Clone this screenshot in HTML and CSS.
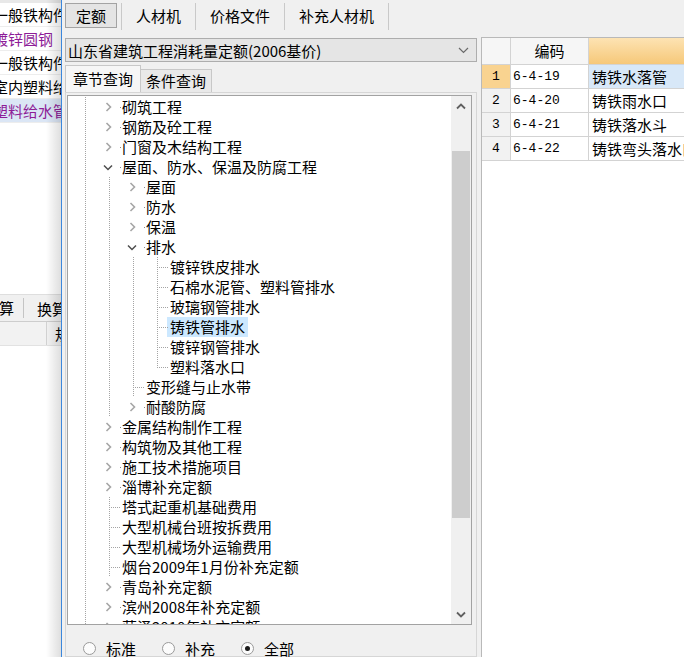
FILE: index.html
```html
<!DOCTYPE html>
<html lang="zh-CN">
<head>
<meta charset="utf-8">
<title>定额</title>
<link rel="stylesheet" href="styles.css">
</head>
<body>
<div class="screen">
  <aside class="left">
    <div class="lgrid">
      <div class="lrow">一般铁构件</div>
      <div class="lrow purple">镀锌圆钢</div>
      <div class="lrow">一般铁构件</div>
      <div class="lrow">室内塑料给水管</div>
      <div class="lrow purple sel">塑料给水管</div>
    </div>
    <div class="lhead"><span class="lh1">计算</span><span class="lh2">换算</span></div>
    <div class="lsub"><span class="ls1"></span><span class="ls2">规格</span></div>
    <div class="lshade"></div>
  </aside>

  <main class="win">
    <nav class="tabs">
      <span class="tab on">定额</span>
      <span class="tab">人材机</span>
      <span class="tab">价格文件</span>
      <span class="tab last">补充人材机</span>
    </nav>

    <div class="body">
      <section class="query">
        <div class="combo">
          <span>山东省建筑工程消耗量定额(2006基价)</span>
          <svg class="cv" width="11" height="7" viewBox="0 0 11 7"><polyline points="1,1 5.5,5.5 10,1" fill="none" stroke="#6a6a6a" stroke-width="1.2"/></svg>
        </div>
        <div class="subtabs">
          <span class="st on">章节查询</span>
          <span class="st">条件查询</span>
        </div>
        <div class="pane">
          <div class="treebox">
            <div class="tree">
              <div class="r"><span class="g v"></span><span class="n col"><svg width="7" height="10" viewBox="0 0 7 10"><polyline points="1.5,1 5.5,5 1.5,9"/></svg></span><span class="t">砌筑工程</span></div>
              <div class="r"><span class="g v"></span><span class="n col"><svg width="7" height="10" viewBox="0 0 7 10"><polyline points="1.5,1 5.5,5 1.5,9"/></svg></span><span class="t">钢筋及砼工程</span></div>
              <div class="r"><span class="g v"></span><span class="n col"><svg width="7" height="10" viewBox="0 0 7 10"><polyline points="1.5,1 5.5,5 1.5,9"/></svg></span><span class="t">门窗及木结构工程</span></div>
              <div class="r"><span class="g v"></span><span class="n exp"><svg width="10" height="7" viewBox="0 0 10 7"><polyline points="1,1.5 5,5.5 9,1.5"/></svg></span><span class="t">屋面、防水、保温及防腐工程</span></div>
              <div class="r"><span class="g v"></span><span class="g v"></span><span class="n col"><svg width="7" height="10" viewBox="0 0 7 10"><polyline points="1.5,1 5.5,5 1.5,9"/></svg></span><span class="t">屋面</span></div>
              <div class="r"><span class="g v"></span><span class="g v"></span><span class="n col"><svg width="7" height="10" viewBox="0 0 7 10"><polyline points="1.5,1 5.5,5 1.5,9"/></svg></span><span class="t">防水</span></div>
              <div class="r"><span class="g v"></span><span class="g v"></span><span class="n col"><svg width="7" height="10" viewBox="0 0 7 10"><polyline points="1.5,1 5.5,5 1.5,9"/></svg></span><span class="t">保温</span></div>
              <div class="r"><span class="g v"></span><span class="g v"></span><span class="n exp"><svg width="10" height="7" viewBox="0 0 10 7"><polyline points="1,1.5 5,5.5 9,1.5"/></svg></span><span class="t">排水</span></div>
              <div class="r"><span class="g v"></span><span class="g v"></span><span class="g v"></span><span class="n leaf"></span><span class="t">镀锌铁皮排水</span></div>
              <div class="r"><span class="g v"></span><span class="g v"></span><span class="g v"></span><span class="n leaf"></span><span class="t">石棉水泥管、塑料管排水</span></div>
              <div class="r"><span class="g v"></span><span class="g v"></span><span class="g v"></span><span class="n leaf"></span><span class="t">玻璃钢管排水</span></div>
              <div class="r"><span class="g v"></span><span class="g v"></span><span class="g v"></span><span class="n leaf"></span><span class="t sel">铸铁管排水</span></div>
              <div class="r"><span class="g v"></span><span class="g v"></span><span class="g v"></span><span class="n leaf"></span><span class="t">镀锌钢管排水</span></div>
              <div class="r"><span class="g v"></span><span class="g v"></span><span class="g v"></span><span class="n leaf last"></span><span class="t">塑料落水口</span></div>
              <div class="r"><span class="g v"></span><span class="g v"></span><span class="n leaf"></span><span class="t">变形缝与止水带</span></div>
              <div class="r"><span class="g v"></span><span class="g v"></span><span class="n col"><svg width="7" height="10" viewBox="0 0 7 10"><polyline points="1.5,1 5.5,5 1.5,9"/></svg></span><span class="t">耐酸防腐</span></div>
              <div class="r"><span class="g v"></span><span class="n col"><svg width="7" height="10" viewBox="0 0 7 10"><polyline points="1.5,1 5.5,5 1.5,9"/></svg></span><span class="t">金属结构制作工程</span></div>
              <div class="r"><span class="g v"></span><span class="n col"><svg width="7" height="10" viewBox="0 0 7 10"><polyline points="1.5,1 5.5,5 1.5,9"/></svg></span><span class="t">构筑物及其他工程</span></div>
              <div class="r"><span class="g v"></span><span class="n col"><svg width="7" height="10" viewBox="0 0 7 10"><polyline points="1.5,1 5.5,5 1.5,9"/></svg></span><span class="t">施工技术措施项目</span></div>
              <div class="r"><span class="g v"></span><span class="n col"><svg width="7" height="10" viewBox="0 0 7 10"><polyline points="1.5,1 5.5,5 1.5,9"/></svg></span><span class="t">淄博补充定额</span></div>
              <div class="r"><span class="g v"></span><span class="n leaf"></span><span class="t">塔式起重机基础费用</span></div>
              <div class="r"><span class="g v"></span><span class="n leaf"></span><span class="t">大型机械台班按拆费用</span></div>
              <div class="r"><span class="g v"></span><span class="n leaf"></span><span class="t">大型机械场外运输费用</span></div>
              <div class="r"><span class="g v"></span><span class="n leaf"></span><span class="t">烟台2009年1月份补充定额</span></div>
              <div class="r"><span class="g v"></span><span class="n col"><svg width="7" height="10" viewBox="0 0 7 10"><polyline points="1.5,1 5.5,5 1.5,9"/></svg></span><span class="t">青岛补充定额</span></div>
              <div class="r"><span class="g v"></span><span class="n col"><svg width="7" height="10" viewBox="0 0 7 10"><polyline points="1.5,1 5.5,5 1.5,9"/></svg></span><span class="t">滨州2008年补充定额</span></div>
              <div class="r"><span class="g v"></span><span class="n col"><svg width="7" height="10" viewBox="0 0 7 10"><polyline points="1.5,1 5.5,5 1.5,9"/></svg></span><span class="t">菏泽2010年补充定额</span></div>
            </div>
            <div class="vs">
              <div class="arr"><svg width="10" height="7" viewBox="0 0 10 7"><polyline points="1,5.5 5,1.5 9,5.5"/></svg></div>
              <div class="track"><div class="thumb"></div></div>
              <div class="arr down"><svg width="10" height="7" viewBox="0 0 10 7"><polyline points="1,1.5 5,5.5 9,1.5"/></svg></div>
            </div>
          </div>
          <div class="radios">
            <label class="rad"><i></i><span>标准</span></label>
            <label class="rad"><i></i><span>补充</span></label>
            <label class="rad on"><i></i><span>全部</span></label>
          </div>
        </div>
      </section>

      <section class="grid">
        <div class="gt">
          <div class="c h"></div>
          <div class="c h ctr">编码</div>
          <div class="c h hot"></div>

          <div class="c num cur">1</div>
          <div class="c code">6-4-19</div>
          <div class="c name sel">铸铁水落管</div>

          <div class="c num">2</div>
          <div class="c code">6-4-20</div>
          <div class="c name">铸铁雨水口</div>

          <div class="c num">3</div>
          <div class="c code">6-4-21</div>
          <div class="c name">铸铁落水斗</div>

          <div class="c num">4</div>
          <div class="c code">6-4-22</div>
          <div class="c name">铸铁弯头落水口</div>
        </div>
      </section>
    </div>
  </main>
</div>
</body>
</html>
```

FILE: styles.css
```css
* { box-sizing: border-box; margin: 0; padding: 0; }

html, body {
  width: 684px;
  height: 657px;
  overflow: hidden;
  background: #f0f0f0;
}

body {
  font-family: "Noto Sans CJK SC", "Microsoft YaHei", sans-serif;
  font-size: 15px;
  color: #000;
}

.screen {
  display: flex;
  width: 684px;
  height: 657px;
}

/* ---------- left (background window) ---------- */
.left {
  width: 61px;
  flex: none;
  background: #fff;
  position: relative;
  overflow: hidden;
  display: flex;
  flex-direction: column;
}

.lgrid {
  border-top: 3px solid #e8e8e8;
}

.lrow {
  height: 24px;
  line-height: 23px;
  white-space: nowrap;
  text-indent: -7px;
  border-bottom: 1px solid #ededed;
}

.lrow.purple { color: #8e1d98; }
.lrow.sel { background: #dbe6f5; }

.lhead {
  margin-top: 171px;
  height: 28px;
  background: #f0f0f0;
  border-top: 1px solid #dedede;
  border-bottom: 1px solid #cdcdcd;
  display: flex;
  align-items: center;
  white-space: nowrap;
}

.lh1 {
  width: 24px;
  flex: none;
  display: flex;
  justify-content: flex-end;
  padding-right: 9px;
  border-right: 1px solid #c4c4c4;
  height: 20px;
  line-height: 20px;
}

.lh2 { padding-left: 13px; }

.lsub {
  height: 24px;
  background: #f2f2f2;
  border-bottom: 1px solid #e2e2e2;
  display: flex;
  white-space: nowrap;
}

.ls1 {
  width: 47px;
  flex: none;
  border-right: 1px solid #d2d2d2;
}

.ls2 {
  padding-left: 8px;
  line-height: 23px;
}

.lshade {
  position: absolute;
  top: 0;
  right: 0;
  bottom: 0;
  width: 15px;
  background: linear-gradient(to right, rgba(0,0,0,0), rgba(0,0,0,0.13));
  pointer-events: none;
}

/* ---------- main window ---------- */
.win {
  flex: 1;
  min-width: 0;
  border-left: 1px solid #3b87dc;
  background: #f0f0f0;
  display: flex;
  flex-direction: column;
}

.tabs {
  height: 31px;
  flex: none;
  display: flex;
  align-items: flex-start;
  padding: 3px 0 0 3px;
}

.tab {
  height: 27px;
  line-height: 25px;
  padding: 0 14px;
  border-left: 1px solid #c9c9c9;
  white-space: nowrap;
}

.tab.last { border-right: 1px solid #c9c9c9; }

.tab.on {
  height: 25px;
  line-height: 23px;
  padding: 0 10px;
  margin-right: 4px;
  border: 1px solid #a3a3a3;
  background: #e4e4e4;
}

.body {
  flex: 1;
  min-height: 0;
  display: flex;
}

.query {
  width: 415px;
  flex: none;
  padding-left: 3px;
  display: flex;
  flex-direction: column;
}

.combo {
  margin-top: 7px;
  height: 24px;
  flex: none;
  border: 1px solid #adadad;
  background: #e5e5e5;
  display: flex;
  align-items: center;
  justify-content: space-between;
  padding: 0 7px 0 2px;
  white-space: nowrap;
}

.subtabs {
  margin-top: 3px;
  height: 27px;
  flex: none;
  display: flex;
  align-items: flex-end;
}

.st {
  height: 23px;
  line-height: 21px;
  padding: 0 5px;
  border: 1px solid #c8c8c8;
  border-left: none;
  border-bottom: none;
  background: #e9e9e9;
  white-space: nowrap;
}

.st.on {
  height: 27px;
  line-height: 25px;
  padding: 0 7px;
  border-left: 1px solid #c8c8c8;
  background: #f6f6f6;
}

.pane {
  flex: 1;
  min-height: 0;
  border: 1px solid #d6d6d6;
  padding: 2px 4px 0 1px;
  display: flex;
  flex-direction: column;
}

.treebox {
  height: 530px;
  flex: none;
  border: 1px solid #a2a2a2;
  background: #fff;
  display: flex;
  overflow: hidden;
}

.tree {
  flex: 1;
  min-width: 0;
  padding-top: 1px;
  overflow: hidden;
}

.r {
  display: flex;
  height: 20px;
  align-items: center;
  white-space: nowrap;
}

.g, .n {
  width: 24px;
  height: 20px;
  flex: none;
  position: relative;
}

.g.v::before,
.n.leaf::before {
  content: "";
  position: absolute;
  left: 17px;
  top: 0;
  bottom: 0;
  width: 1px;
  background: repeating-linear-gradient(to bottom, #a4a4a4 0 1px, transparent 1px 2px);
}

.n.leaf.last::before { bottom: 9px; }

.n.leaf::after {
  content: "";
  position: absolute;
  left: 17px;
  top: 10px;
  width: 11px;
  height: 1px;
  background: repeating-linear-gradient(to right, #a4a4a4 0 1px, transparent 1px 2px);
}

.n.col::after,
.n.exp::after {
  content: "";
  position: absolute;
  left: 28px;
  top: 10px;
  width: 1px;
  height: 1px;
  background: #8a8a8a;
}

.n svg {
  position: absolute;
  fill: none;
}

.n.col svg {
  left: 13px;
  top: 5px;
  stroke: #a6a6a6;
  stroke-width: 1.6;
}

.n.exp svg {
  left: 11px;
  top: 7px;
  stroke: #4d4d4d;
  stroke-width: 1.5;
}

.t {
  margin-left: 3px;
  padding: 0 3px;
  height: 20px;
  line-height: 19px;
}

.t.sel { background: #cce8ff; }

.vs {
  width: 20px;
  flex: none;
  background: #f0f0f0;
  display: flex;
  flex-direction: column;
}

.arr {
  height: 20px;
  flex: none;
  display: flex;
  align-items: center;
  justify-content: center;
}

.arr svg {
  fill: none;
  stroke: #606060;
  stroke-width: 1.8;
}

.track {
  flex: 1;
  padding: 35px 1px 0 1px;
}

.thumb {
  height: 367px;
  background: #cdcdcd;
}

.radios {
  display: flex;
  align-items: center;
  gap: 26px;
  padding: 14px 0 0 16px;
}

.rad {
  display: flex;
  align-items: center;
  gap: 10px;
  height: 18px;
}

.rad i {
  width: 13px;
  height: 13px;
  border-radius: 50%;
  border: 1px solid #9a9a9a;
  background: #fcfcfc;
  position: relative;
}

.rad.on i::after {
  content: "";
  position: absolute;
  left: 3px;
  top: 3px;
  width: 5px;
  height: 5px;
  border-radius: 50%;
  background: #1a1a1a;
}

/* ---------- right grid ---------- */
.grid {
  flex: 1;
  min-width: 0;
  margin: 6px 0 0 4px;
  border-left: 1px solid #b9b9b9;
  border-top: 1px solid #b9b9b9;
  background: #fff;
  overflow: hidden;
}

.gt {
  display: grid;
  grid-template-columns: 29px 78px 130px;
}

.c {
  height: 24px;
  line-height: 23px;
  border-right: 1px solid #d3d3d3;
  border-bottom: 1px solid #d3d3d3;
  white-space: nowrap;
  overflow: hidden;
}

.c.h {
  height: 27px;
  line-height: 26px;
  background: #f6f6f6;
}

.c.ctr { text-align: center; }

.c.hot {
  background: linear-gradient(#fde3b3, #f6c879);
}

.c.num {
  background: #f2f2f2;
  text-align: center;
  font-family: "Liberation Mono", "DejaVu Sans Mono", monospace;
  font-size: 13px;
}

.c.num.cur { background: #f9d390; }

.c.code {
  padding-left: 2px;
  font-family: "Liberation Mono", "DejaVu Sans Mono", monospace;
  font-size: 13px;
}

.c.name { padding-left: 3px; }
.c.name.sel { background: #d8e8f8; }
```
